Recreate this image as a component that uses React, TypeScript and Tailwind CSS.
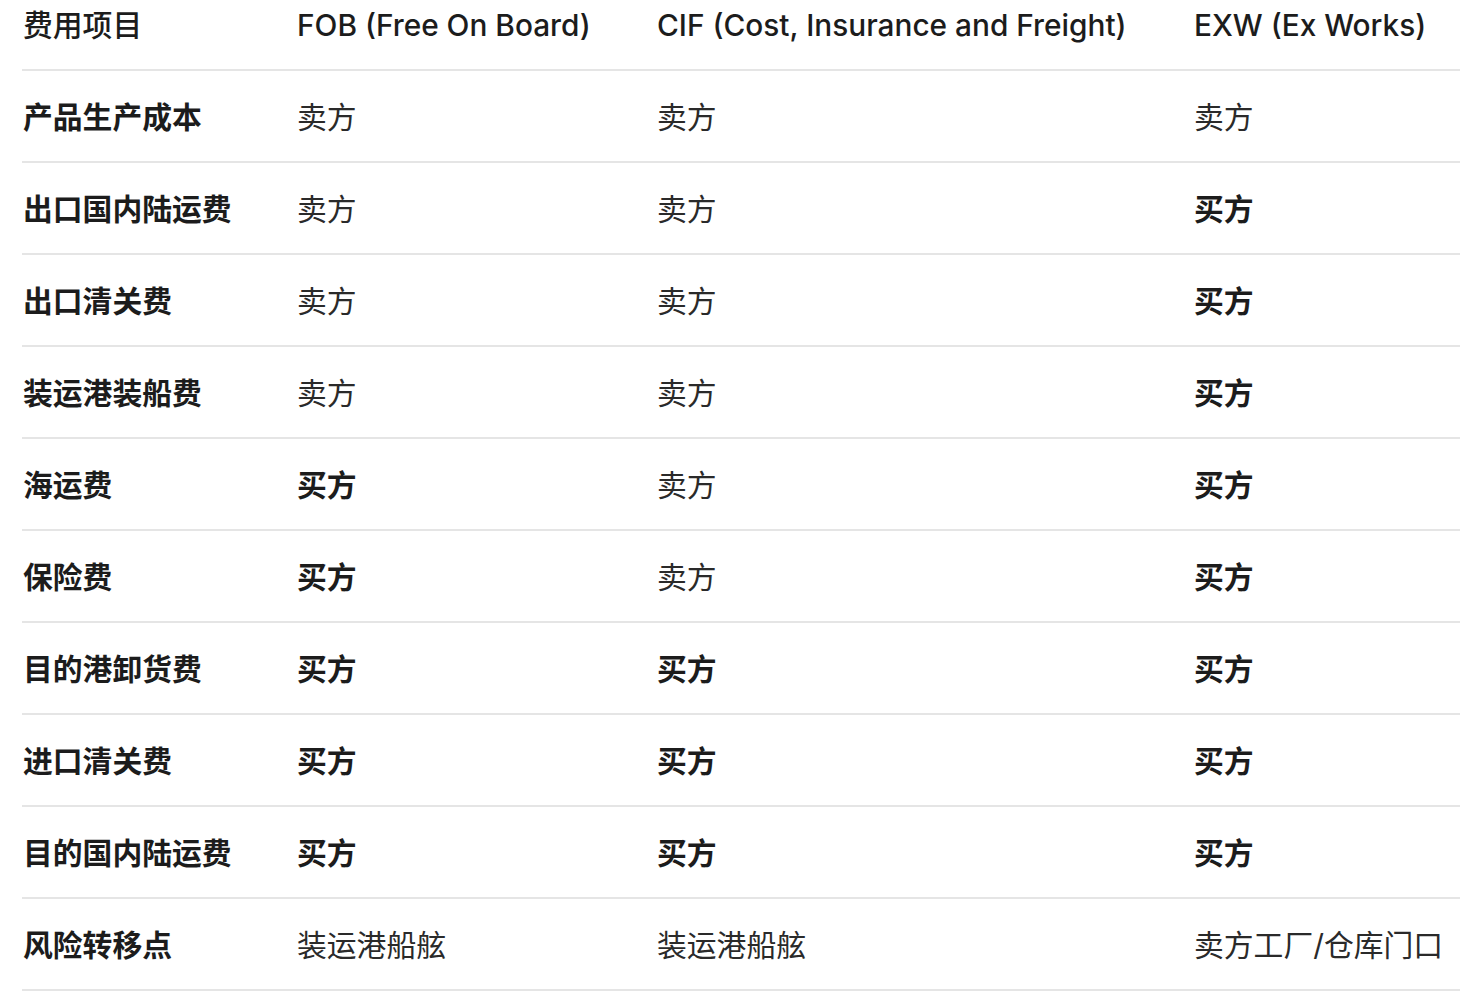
const headers = ["费用项目", "FOB (Free On Board)", "CIF (Cost, Insurance and Freight)", "EXW (Ex Works)"];

type Cell = { text: string; bold?: boolean };

const S = (text: string): Cell => ({ text });
const B = (text: string): Cell => ({ text, bold: true });

const rows: [string, Cell, Cell, Cell][] = [
    ["产品生产成本", S("卖方"), S("卖方"), S("卖方")],
    ["出口国内陆运费", S("卖方"), S("卖方"), B("买方")],
    ["出口清关费", S("卖方"), S("卖方"), B("买方")],
    ["装运港装船费", S("卖方"), S("卖方"), B("买方")],
    ["海运费", B("买方"), S("卖方"), B("买方")],
    ["保险费", B("买方"), S("卖方"), B("买方")],
    ["目的港卸货费", B("买方"), B("买方"), B("买方")],
    ["进口清关费", B("买方"), B("买方"), B("买方")],
    ["目的国内陆运费", B("买方"), B("买方"), B("买方")],
    ["风险转移点", S("装运港船舷"), S("装运港船舷"), S("卖方工厂/仓库门口")],
];

const grid = "grid grid-cols-[274px_360px_537px_1fr] h-[92px] items-center border-b-2 border-[#e5e5e5]";

const App = () => {
    return (
        <div
            className="min-h-[992px] bg-white overflow-hidden pl-[22px] text-[29.8px] leading-[44px] text-[#1c1c1c]"
            style={{ fontFamily: 'Inter, "Noto Sans CJK SC", sans-serif' }}
        >
            <div className="w-[1460px] -mt-[21px]">
                <div className={grid}>
                    {headers.map((h) => (
                        <div key={h} className="pl-[1px] pt-[2px] whitespace-nowrap font-medium">{h}</div>
                    ))}
                </div>
                {rows.map(([label, a, b, c]) => (
                    <div key={label} className={grid}>
                        <div className="pl-[1px] pt-[2px] font-bold whitespace-nowrap">{label}</div>
                        {[a, b, c].map((cell, i) => (
                            <div key={i} className={`pl-[1px] pt-[2px] whitespace-nowrap ${cell.bold ? "font-bold" : "font-normal text-[#2a2a2a]"}`}>
                                {cell.text}
                            </div>
                        ))}
                    </div>
                ))}
            </div>
        </div>
    );
};

export default App;
